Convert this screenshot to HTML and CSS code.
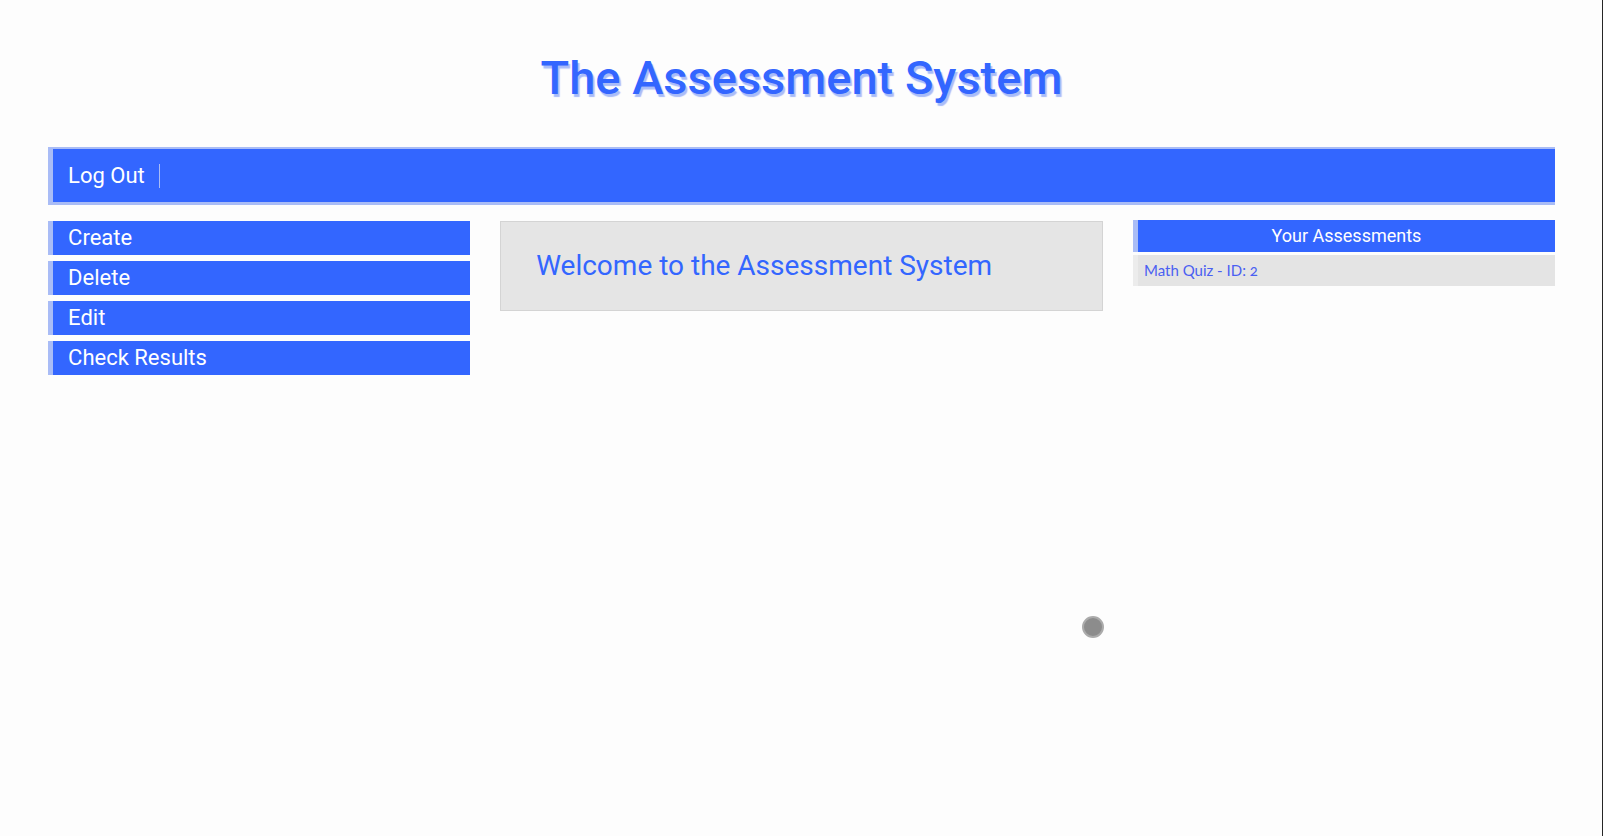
FILE: index.html
```html
<!DOCTYPE html>
<html lang="en">
<head>
<meta charset="utf-8">
<title>The Assessment System</title>
<link rel="stylesheet" href="styles.css">
</head>
<body>
<div class="page">
  <header class="masthead">
    <h1 class="title">The Assessment System</h1>
  </header>
  <nav class="topnav">
    <a class="topnav-link" href="#">Log Out</a>
  </nav>
  <main class="content">
    <aside class="sidebar">
      <a class="side-btn" href="#">Create</a>
      <a class="side-btn" href="#">Delete</a>
      <a class="side-btn" href="#">Edit</a>
      <a class="side-btn" href="#">Check Results</a>
    </aside>
    <section class="welcome">
      <h2 class="welcome-title">Welcome to the Assessment System</h2>
    </section>
    <aside class="assessments">
      <div class="assess-head">Your Assessments</div>
      <div class="assess-item">Math Quiz - ID: 2</div>
    </aside>
  </main>
</div>
<div class="cursor-dot"></div>
</body>
</html>
```
FILE: styles.css
```css
html, body {
  margin: 0;
  padding: 0;
}
body {
  background: #fdfdfd;
  font-family: Roboto, "Noto Sans", sans-serif;
  min-height: 836px;
}
body::after {
  content: "";
  position: fixed;
  top: 0;
  right: 0;
  bottom: 0;
  width: 1px;
  background: #262626;
}
.page {
  width: 94%;
  margin: 0 3%;
}
.masthead {
  padding-top: 48px;
  margin-bottom: 39px;
}
.title {
  margin: 0;
  text-align: center;
  font-size: 47px;
  line-height: 60px;
  font-weight: 500;
  color: #3366ff;
  text-shadow: 2px 3px 1px #a9bcf8;
}
.topnav {
  display: flex;
  align-items: center;
  height: 53px;
  background: #3366ff;
  border-top: 2px solid #a9bcf6;
  border-bottom: 3px solid #a9bcf6;
  border-left: 5px solid #a9bcf6;
  padding-left: 15px;
}
.topnav-link {
  color: #ffffff;
  text-decoration: none;
  font-size: 22px;
  line-height: 24px;
  padding-right: 14px;
  border-right: 1px solid #a9bcf6;
}
.content {
  display: flex;
  justify-content: space-between;
  align-items: flex-start;
  margin-top: 16px;
}
.sidebar {
  width: 28%;
  display: flex;
  flex-direction: column;
  gap: 6px;
}
.side-btn {
  display: block;
  height: 34px;
  line-height: 34px;
  background: #3366ff;
  border-left: 5px solid #a9bcf6;
  padding-left: 15px;
  color: #ffffff;
  font-size: 22px;
  text-decoration: none;
}
.welcome {
  width: 40%;
  box-sizing: border-box;
  height: 90px;
  background: #e5e5e5;
  border: 1px solid #d4d4d4;
  padding: 0 35px;
}
.welcome-title {
  margin: 0;
  font-size: 28px;
  font-weight: 400;
  line-height: 88px;
  color: #3366ff;
}
.assessments {
  width: 28%;
  margin-top: -1px;
  display: flex;
  flex-direction: column;
  gap: 3px;
}
.assess-head {
  height: 32px;
  line-height: 32px;
  background: #3366ff;
  border-left: 5px solid #a9bcf6;
  color: #ffffff;
  font-size: 18px;
  text-align: center;
}
.assess-item {
  height: 31px;
  line-height: 31px;
  background: #e4e4e4;
  border-left: 5px solid #ececec;
  padding-left: 6px;
  color: #4a5ff2;
  font-family: Lato, "Open Sans", sans-serif;
  font-size: 15px;
  font-variant-numeric: oldstyle-nums;
}
.cursor-dot {
  position: absolute;
  left: 1082px;
  top: 616px;
  width: 18px;
  height: 18px;
  border-radius: 50%;
  background: #8c8c8c;
  border: 2px solid #ababab;
}
```
